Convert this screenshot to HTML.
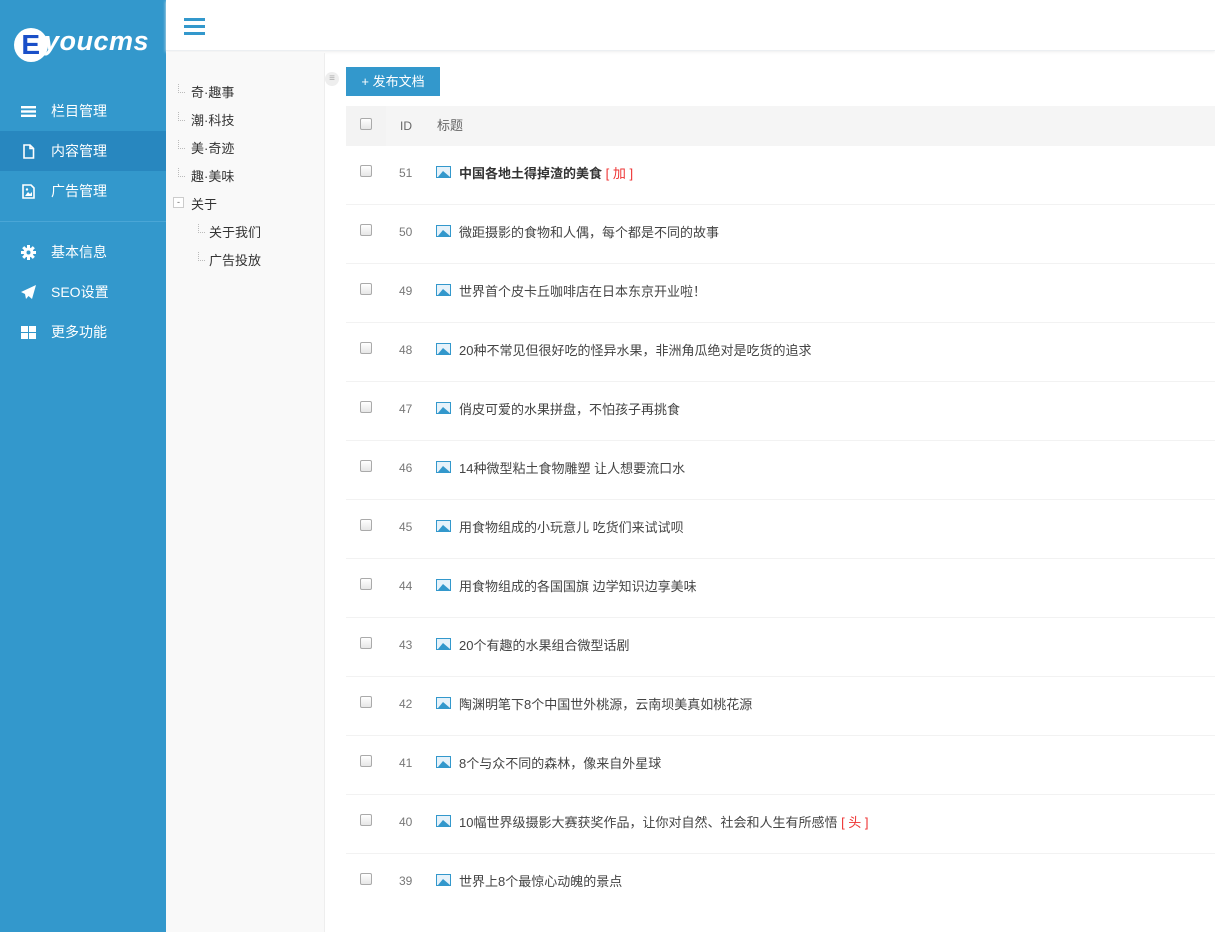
<!DOCTYPE html>
<html><head><meta charset="utf-8"><style>
*{margin:0;padding:0;box-sizing:border-box}
body{width:1215px;height:932px;overflow:hidden;font-family:"Liberation Sans","Noto Sans CJK SC",sans-serif;font-size:13px;color:#444;background:#fff;position:relative}
.side{position:absolute;left:0;top:0;width:166px;height:932px;background:#3398cc}
.logo{position:absolute;left:14px;top:26px;color:#fff;font-size:27px;font-style:italic;font-weight:bold;letter-spacing:0.5px}
.logo .e{display:inline-block;width:34px;height:34px;border-radius:50%;background:#fff;color:#1a4fc8;text-align:center;line-height:34px;font-style:normal;font-size:28px;vertical-align:-4px;margin-right:-4px}
.nav{position:absolute;left:0;width:166px;height:40px;color:#fff;font-size:14px;line-height:40px;padding-left:51px}
.nav.act{background:#2887bf}
.ico{position:absolute;left:21px;top:13px;width:15px;height:15px}
.sep{position:absolute;left:0;top:221px;width:166px;height:1px;background:#4aa6d6}
.top{position:absolute;left:166px;top:0;right:0;height:51px;background:#fff;border-bottom:1px solid #eceff2;box-shadow:0 1px 3px #eee}
.ham{position:absolute;left:184px;top:18px;width:21px}
.ham i{display:block;height:3px;background:#3398cc;margin-bottom:4px}
.tree{position:absolute;left:166px;top:53px;width:159px;height:879px;background:#f9f9f9;border-right:1px solid #eee}
.ti{position:absolute;font-size:13px;color:#333}
.ln{position:absolute;border-left:1px dotted #bbb;border-bottom:1px dotted #bbb;width:7px;height:9px}
.btn{position:absolute;left:346px;top:67px;width:94px;height:29px;background:#3398cc;color:#fff;font-size:13px;line-height:29px;text-align:center}
.thead{position:absolute;left:346px;top:106px;right:0;height:40px;background:#f5f5f5}
.thead div{position:absolute;top:0;height:40px;line-height:40px;color:#666}
.cb{position:absolute;width:12px;height:12px;border:1px solid #aaa;border-radius:2px;background:linear-gradient(#fff,#e6e6e6)}
.row{position:absolute;left:346px;right:0;height:59px;border-bottom:1px solid #f2f2f2}
.row .id{position:absolute;left:53px;top:0;line-height:55px;color:#777;font-size:12px}
.row .pic{position:absolute;left:90px;top:20px;width:15px;height:12px;border:1.5px solid #3398cc;background:#e6f2fa;overflow:hidden}
.row .pic:after{content:"";position:absolute;left:1px;bottom:0;border-left:5px solid transparent;border-right:7px solid transparent;border-bottom:6px solid #3398cc}
.row .t{position:absolute;left:113px;top:0;line-height:55px;color:#444}
.row .t b{color:#333}
.red{color:#e33}
</style></head><body>
<div class="side">
<div class="logo"><span class="e">E</span>youcms</div>
<div class="nav" style="top:91px"><svg class="ico" viewBox="0 0 15 15"><rect x="0" y="2" width="15" height="2.4" fill="#fff"/><rect x="0" y="6.3" width="15" height="2.4" fill="#fff"/><rect x="0" y="10.6" width="15" height="2.4" fill="#fff"/></svg>栏目管理</div>
<div class="nav act" style="top:131px"><svg class="ico" viewBox="0 0 15 15"><path d="M3 1h6l3.5 3.5V14H3z M9 1v3.5h3.5" fill="none" stroke="#fff" stroke-width="1.6"/></svg>内容管理</div>
<div class="nav" style="top:171px"><svg class="ico" viewBox="0 0 15 15"><path d="M2 1h8l3 3v10H2z" fill="none" stroke="#fff" stroke-width="1.6"/><path d="M4 12l3-4 2 2 2-2v4z" fill="#fff"/><circle cx="6" cy="5.5" r="1.2" fill="#fff"/></svg>广告管理</div>
<div class="sep"></div>
<div class="nav" style="top:232px"><svg class="ico" viewBox="0 0 15 15"><circle cx="7.5" cy="7.5" r="5" fill="#fff"/><g stroke="#fff" stroke-width="3"><path d="M7.5 0v15M0 7.5h15M2.2 2.2l10.6 10.6M12.8 2.2L2.2 12.8"/></g><circle cx="7.5" cy="7.5" r="2" fill="#3398cc"/></svg>基本信息</div>
<div class="nav" style="top:272px"><svg class="ico" viewBox="0 0 15 15"><path d="M15 0L0 7l4 2 1 5 2.5-3 3.5 3z" fill="#fff"/></svg>SEO设置</div>
<div class="nav" style="top:312px"><svg class="ico" viewBox="0 0 15 15"><rect x="0" y="1" width="7" height="6" fill="#fff"/><rect x="8" y="1" width="7" height="6" fill="#fff"/><rect x="0" y="8" width="7" height="6" fill="#fff"/><rect x="8" y="8" width="7" height="6" fill="#fff"/></svg>更多功能</div>
</div>
<div class="top"></div>
<div class="ham"><i></i><i></i><i></i></div>
<div class="tree"></div>
<div class="ln" style="left:178px;top:84px"></div><div class="ti" style="left:191px;top:82px">奇·趣事</div>
<div class="ln" style="left:178px;top:112px"></div><div class="ti" style="left:191px;top:110px">潮·科技</div>
<div class="ln" style="left:178px;top:140px"></div><div class="ti" style="left:191px;top:138px">美·奇迹</div>
<div class="ln" style="left:178px;top:168px"></div><div class="ti" style="left:191px;top:166px">趣·美味</div>
<div style="position:absolute;left:173px;top:197px;width:11px;height:11px;border:1px solid #ccc;background:#fff;font-size:9px;line-height:8px;text-align:center;color:#666">-</div><div class="ti" style="left:191px;top:194px">关于</div>
<div class="ln" style="left:198px;top:224px"></div><div class="ti" style="left:209px;top:222px">关于我们</div>
<div class="ln" style="left:198px;top:252px"></div><div class="ti" style="left:209px;top:250px">广告投放</div>
<div style="position:absolute;left:325px;top:72px;width:14px;height:14px;border-radius:50%;background:#eee;color:#aaa;font-size:10px;line-height:14px;text-align:center">≡</div>
<div class="btn">+ 发布文档</div>
<div class="thead"><div style="left:0;width:40px;background:#f3f3f3"><span class="cb" style="left:14px;top:12px"></span></div><div style="left:54px;font-size:12px">ID</div><div style="left:91px">标题</div></div>
<div class="row" style="top:146px"><span class="cb" style="left:14px;top:19px"></span><span class="id">51</span><span class="pic"></span><span class="t"><b>中国各地土得掉渣的美食</b> <span class="red">[ 加 ]</span></span></div>
<div class="row" style="top:205px"><span class="cb" style="left:14px;top:19px"></span><span class="id">50</span><span class="pic"></span><span class="t">微距摄影的食物和人偶，每个都是不同的故事</span></div>
<div class="row" style="top:264px"><span class="cb" style="left:14px;top:19px"></span><span class="id">49</span><span class="pic"></span><span class="t">世界首个皮卡丘咖啡店在日本东京开业啦！</span></div>
<div class="row" style="top:323px"><span class="cb" style="left:14px;top:19px"></span><span class="id">48</span><span class="pic"></span><span class="t">20种不常见但很好吃的怪异水果，非洲角瓜绝对是吃货的追求</span></div>
<div class="row" style="top:382px"><span class="cb" style="left:14px;top:19px"></span><span class="id">47</span><span class="pic"></span><span class="t">俏皮可爱的水果拼盘，不怕孩子再挑食</span></div>
<div class="row" style="top:441px"><span class="cb" style="left:14px;top:19px"></span><span class="id">46</span><span class="pic"></span><span class="t">14种微型粘土食物雕塑 让人想要流口水</span></div>
<div class="row" style="top:500px"><span class="cb" style="left:14px;top:19px"></span><span class="id">45</span><span class="pic"></span><span class="t">用食物组成的小玩意儿 吃货们来试试呗</span></div>
<div class="row" style="top:559px"><span class="cb" style="left:14px;top:19px"></span><span class="id">44</span><span class="pic"></span><span class="t">用食物组成的各国国旗 边学知识边享美味</span></div>
<div class="row" style="top:618px"><span class="cb" style="left:14px;top:19px"></span><span class="id">43</span><span class="pic"></span><span class="t">20个有趣的水果组合微型话剧</span></div>
<div class="row" style="top:677px"><span class="cb" style="left:14px;top:19px"></span><span class="id">42</span><span class="pic"></span><span class="t">陶渊明笔下8个中国世外桃源，云南坝美真如桃花源</span></div>
<div class="row" style="top:736px"><span class="cb" style="left:14px;top:19px"></span><span class="id">41</span><span class="pic"></span><span class="t">8个与众不同的森林，像来自外星球</span></div>
<div class="row" style="top:795px"><span class="cb" style="left:14px;top:19px"></span><span class="id">40</span><span class="pic"></span><span class="t">10幅世界级摄影大赛获奖作品，让你对自然、社会和人生有所感悟 <span class="red">[ 头 ]</span></span></div>
<div class="row" style="top:854px;border:0"><span class="cb" style="left:14px;top:19px"></span><span class="id">39</span><span class="pic"></span><span class="t">世界上8个最惊心动魄的景点</span></div>
</body></html>
